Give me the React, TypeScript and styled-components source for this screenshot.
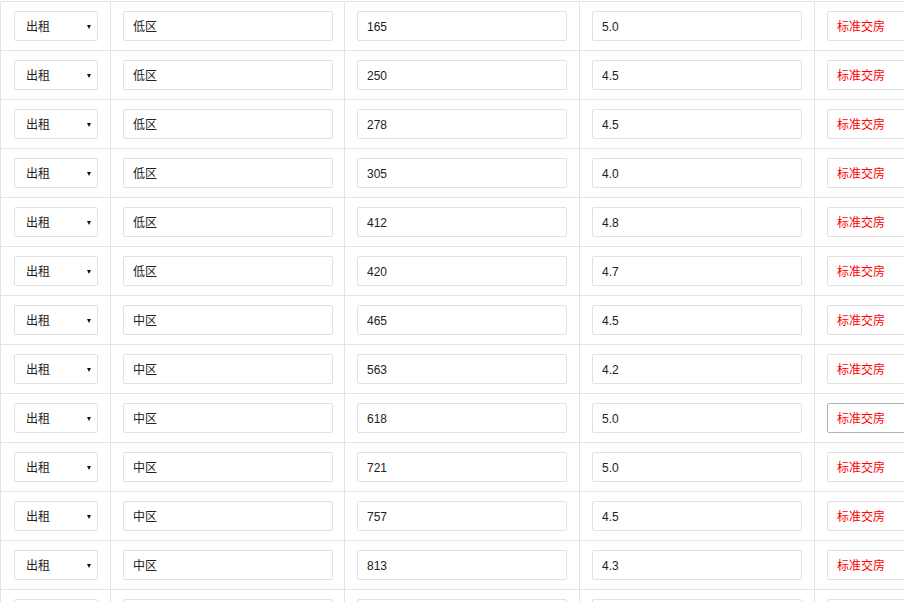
import React from 'react';
import styled, { createGlobalStyle } from 'styled-components';

const GlobalStyle = createGlobalStyle`
    html, body {
        margin: 0;
        padding: 0;
        background: #fff;
        overflow: hidden;
    }

    body {
        font-family: 'Liberation Sans', 'Noto Sans CJK SC', sans-serif;
        font-size: 12px;
        color: #333;
    }
`;

interface Unit {
    zone: string;
    area: string;
    rate: string;
    focused?: boolean;
}

const units: Unit[] = [
    { zone: '低区', area: '165', rate: '5.0' },
    { zone: '低区', area: '250', rate: '4.5' },
    { zone: '低区', area: '278', rate: '4.5' },
    { zone: '低区', area: '305', rate: '4.0' },
    { zone: '低区', area: '412', rate: '4.8' },
    { zone: '低区', area: '420', rate: '4.7' },
    { zone: '中区', area: '465', rate: '4.5' },
    { zone: '中区', area: '563', rate: '4.2' },
    { zone: '中区', area: '618', rate: '5.0', focused: true },
    { zone: '中区', area: '721', rate: '5.0' },
    { zone: '中区', area: '757', rate: '4.5' },
    { zone: '中区', area: '813', rate: '4.3' },
    { zone: '中区', area: '860', rate: '4.3' },
];

const Sheet = styled.div`
    width: 1100px;
    padding-top: 1px;
`;

const Row = styled.div`
    display: grid;
    grid-template-columns: 110px 234px 235px 235px 235px;
    border-top: 1px solid #e4e4e4;
`;

const Cell = styled.div<{ $first?: boolean }>`
    border-left: 1px solid #e4e4e4;
    padding: 9px 12px 9px ${p => (p.$first ? '13px' : '12px')};
    display: flex;
    align-items: center;
`;

const SelectWrap = styled.div`
    position: relative;
    width: 84px;
    height: 30px;

    &::after {
        content: '';
        position: absolute;
        right: 7px;
        top: 14px;
        border-left: 2.5px solid transparent;
        border-right: 2.5px solid transparent;
        border-top: 4px solid #111;
        pointer-events: none;
    }
`;

const Select = styled.select`
    appearance: none;
    -webkit-appearance: none;
    box-sizing: border-box;
    width: 100%;
    height: 100%;
    margin: 0;
    padding: 2px 0 0 11px;
    border: 1px solid #e1e1e1;
    border-radius: 2px;
    background: #fff;
    font-family: 'Liberation Sans', 'Noto Sans CJK SC', sans-serif;
    font-size: 12px;
    color: #222;
    outline: none;
`;

// CJK glyphs sit a little low next to the latin fallback, nudge each kind
const Field = styled.input<{ $red?: boolean; $focused?: boolean; $cjk?: boolean }>`
    box-sizing: border-box;
    width: 210px;
    height: 30px;
    flex: none;
    margin: 0;
    padding: ${p => (p.$cjk ? '0 9px 1px' : '2px 9px 0')};
    border: 1px solid ${p => (p.$focused ? '#b4b4b4' : '#e1e1e1')};
    border-radius: 2px;
    background: #fff;
    font-family: 'Liberation Sans', 'Noto Sans CJK SC', sans-serif;
    font-size: 12px;
    color: ${p => (p.$red ? '#ff0000' : '#222')};
    outline: none;
`;

export default function App() {
    return (
        <>
            <GlobalStyle />
            <Sheet>
                {units.map((u, i) => (
                    <Row key={i}>
                        <Cell $first>
                            <SelectWrap>
                                <Select defaultValue="rent">
                                    <option value="rent">出租</option>
                                    <option value="sell">出售</option>
                                </Select>
                            </SelectWrap>
                        </Cell>
                        <Cell>
                            <Field defaultValue={u.zone} $cjk />
                        </Cell>
                        <Cell>
                            <Field defaultValue={u.area} />
                        </Cell>
                        <Cell>
                            <Field defaultValue={u.rate} />
                        </Cell>
                        <Cell>
                            <Field defaultValue="标准交房" $red $cjk $focused={u.focused} />
                        </Cell>
                    </Row>
                ))}
            </Sheet>
        </>
    );
}
